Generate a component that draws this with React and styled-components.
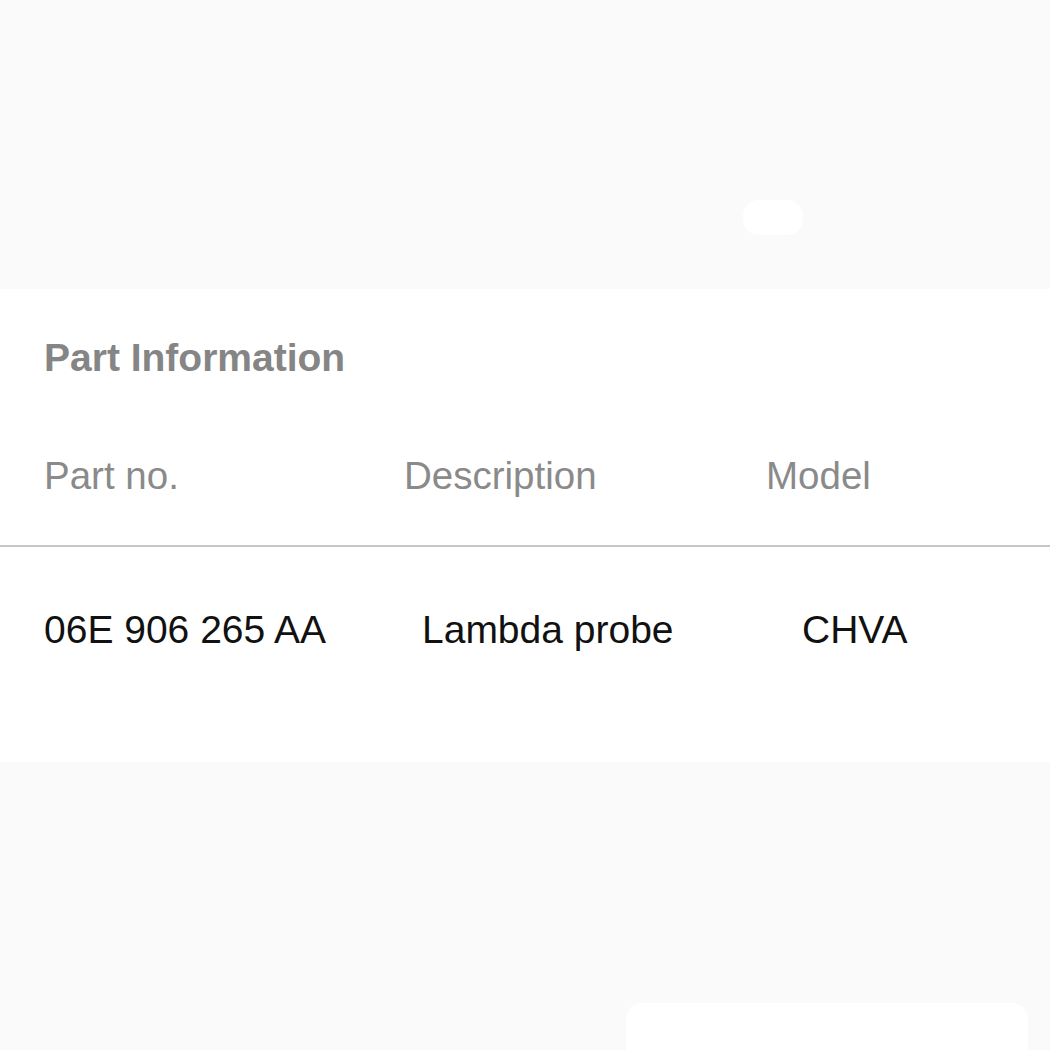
import React from 'react'
import styled, { createGlobalStyle } from 'styled-components'

const GlobalStyle = createGlobalStyle`
  body {
    margin: 0;
    background: #fafafa;
    font-family: "Liberation Sans", Arial, sans-serif;
  }
`

const Page = styled.div`
  width: 1050px;
  height: 1050px;
  overflow: hidden;
  display: flex;
  flex-direction: column;
`

const TopArea = styled.div`
  height: 289px;
  box-sizing: border-box;
  padding: 200px 0 0 743px;
`

const Pill = styled.div`
  width: 60px;
  height: 35px;
  border-radius: 16px;
  background: #ffffff;
`

const Card = styled.section`
  background: #ffffff;
  padding: 47px 0 110px;
`

const Title = styled.h2`
  margin: 0 0 74px 44px;
  font-size: 39px;
  line-height: 44px;
  font-weight: 700;
  color: #858585;
`

const Row = styled.div`
  display: grid;
  grid-template-columns: 360px 362px 1fr;
  padding: ${(p) => (p.$head ? '0 0 47px 44px' : '61px 0 0 44px')};
  border-bottom: ${(p) => (p.$head ? '2px solid #c6c6c6' : 'none')};
`

const Cell = styled.div`
  font-size: ${(p) => (p.$head ? 38.5 : 39)}px;
  line-height: 44px;
  padding-left: ${(p) => p.$indent || 0}px;
  color: ${(p) => (p.$head ? '#8a8a8a' : '#111111')};
  white-space: nowrap;
`

const BottomArea = styled.div`
  flex: 1;
  display: flex;
  align-items: flex-end;
  padding-left: 626px;
`

const NextCard = styled.div`
  width: 402px;
  height: 47px;
  background: #ffffff;
  border-radius: 16px 16px 0 0;
`

const part = { no: '06E 906 265 AA', description: 'Lambda probe', model: 'CHVA' }

export default function App() {
  return (
    <Page>
      <GlobalStyle />
      <TopArea>
        <Pill />
      </TopArea>
      <Card>
        <Title>Part Information</Title>
        <Row $head>
          <Cell $head>Part no.</Cell>
          <Cell $head>Description</Cell>
          <Cell $head>Model</Cell>
        </Row>
        <Row>
          <Cell>{part.no}</Cell>
          <Cell $indent={18}>{part.description}</Cell>
          <Cell $indent={36}>{part.model}</Cell>
        </Row>
      </Card>
      <BottomArea>
        <NextCard />
      </BottomArea>
    </Page>
  )
}
